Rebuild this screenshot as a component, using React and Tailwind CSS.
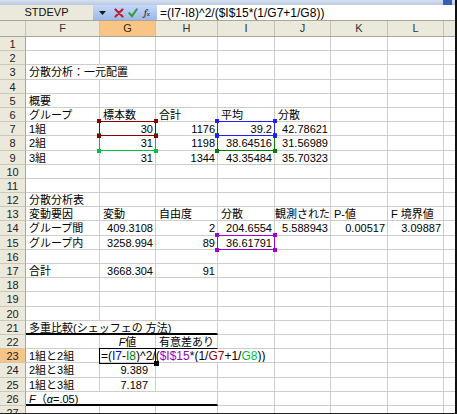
const font = { fontFamily: '"Liberation Sans", "Noto Sans CJK JP", sans-serif' };

const cols = [
  { id: 'F', w: 74 },
  { id: 'G', w: 56 },
  { id: 'H', w: 62 },
  { id: 'I', w: 57 },
  { id: 'J', w: 56 },
  { id: 'K', w: 57 },
  { id: 'L', w: 56 },
  { id: 'M', w: 11 },
];

const ROW_H = 14.2;
const ROWS = Array.from({ length: 27 }, (_, i) => i + 1);

const Formula = () => (
  <>
    =(<span className="text-[#0000ff]">I7</span>-<span className="text-[#008000]">I8</span>)^2/(
    <span className="text-[#9900cc]">$I$15</span>*(1/<span className="text-[#990000]">G7</span>+1/
    <span className="text-[#00c040]">G8</span>))
  </>
);

const cells = {
  3: [{ c: 'F', v: '分散分析：一元配置', span: 2 }],
  5: [{ c: 'F', v: '概要' }],
  6: [
    { c: 'F', v: 'グループ' },
    { c: 'G', v: '標本数' },
    { c: 'H', v: '合計' },
    { c: 'I', v: '平均' },
    { c: 'J', v: '分散' },
  ],
  7: [
    { c: 'F', v: '1組' },
    { c: 'G', v: '30', a: 'r' },
    { c: 'H', v: '1176', a: 'r' },
    { c: 'I', v: '39.2', a: 'r' },
    { c: 'J', v: '42.78621', a: 'r' },
  ],
  8: [
    { c: 'F', v: '2組' },
    { c: 'G', v: '31', a: 'r' },
    { c: 'H', v: '1198', a: 'r' },
    { c: 'I', v: '38.64516', a: 'r' },
    { c: 'J', v: '31.56989', a: 'r' },
  ],
  9: [
    { c: 'F', v: '3組' },
    { c: 'G', v: '31', a: 'r' },
    { c: 'H', v: '1344', a: 'r' },
    { c: 'I', v: '43.35484', a: 'r' },
    { c: 'J', v: '35.70323', a: 'r' },
  ],
  12: [{ c: 'F', v: '分散分析表' }],
  13: [
    { c: 'F', v: '変動要因' },
    { c: 'G', v: '変動' },
    { c: 'H', v: '自由度' },
    { c: 'I', v: '分散' },
    { c: 'J', v: '観測された', a: 'l1' },
    { c: 'K', v: 'P-値' },
    { c: 'L', v: 'F 境界値' },
  ],
  14: [
    { c: 'F', v: 'グループ間' },
    { c: 'G', v: '409.3108', a: 'r' },
    { c: 'H', v: '2', a: 'r' },
    { c: 'I', v: '204.6554', a: 'r' },
    { c: 'J', v: '5.588943', a: 'r' },
    { c: 'K', v: '0.00517', a: 'r' },
    { c: 'L', v: '3.09887', a: 'r' },
  ],
  15: [
    { c: 'F', v: 'グループ内' },
    { c: 'G', v: '3258.994', a: 'r' },
    { c: 'H', v: '89', a: 'r' },
    { c: 'I', v: '36.61791', a: 'r' },
  ],
  17: [
    { c: 'F', v: '合計' },
    { c: 'G', v: '3668.304', a: 'r' },
    { c: 'H', v: '91', a: 'r' },
  ],
  21: [{ c: 'F', v: '多重比較(シェッフェの 方法)', span: 3, cls: 'border-b-2 border-b-black' }],
  22: [
    { c: 'G', v: <><i>F</i>値</>, a: 'c', cls: 'border-b-black' },
    { c: 'H', v: '有意差あり', cls: 'border-b-black' },
  ],
  23: [
    { c: 'F', v: '1組と2組' },
    { c: 'G', v: <Formula />, span: 3, a: 'f', cls: 'bg-white' },
  ],
  24: [
    { c: 'F', v: '2組と3組' },
    { c: 'G', v: '9.389', a: 'r7' },
  ],
  25: [
    { c: 'F', v: '1組と3組' },
    { c: 'G', v: '7.187', a: 'r7' },
  ],
  26: [
    {
      c: 'F',
      v: <><i>F</i>（<i>α</i>=.05)</>,
      span: 3,
      cls: 'border-b-2 border-b-black',
    },
  ],
};

const spanClass = { 1: '', 2: 'col-span-2', 3: 'col-span-3' };
const alignClass = {
  l: 'pl-[3px] text-left',
  l1: 'pl-0 text-left',
  r: 'pr-[2px] text-right',
  r7: 'pr-[7px] text-right',
  c: 'text-center',
  f: 'pl-px text-left text-[12px]',
};

function SheetRow({ n }) {
  const rowCells = cells[n] || [];
  const out = [];
  let i = 0;
  while (i < cols.length) {
    const col = cols[i];
    const cell = rowCells.find((c) => c.c === col.id);
    const span = cell?.span || 1;
    const last = i + span === cols.length;
    out.push(
      <div
        key={col.id}
        className={`overflow-hidden whitespace-nowrap border-b border-[#cdcdcd] text-[11px] leading-[14px] text-black ${
          last ? '' : 'border-r'
        } ${spanClass[span]} ${alignClass[cell?.a || 'l']} ${cell?.cls || ''}`}
      >
        {cell?.v}
      </div>
    );
    i += span;
  }
  const active = n === 23;
  return (
    <div className="flex h-[14.2px]">
      <div
        className={`w-[26px] shrink-0 border-b border-r border-b-[#cbc8b8] border-r-[#a9a693] text-center text-[11px] leading-[14px] text-[#222] ${
          active ? 'bg-[#f8c586]' : 'bg-[#ebe9dc]'
        }`}
      >
        {n}
      </div>
      <div className="grid flex-1 grid-cols-[74px_56px_62px_57px_56px_57px_56px_11px]">{out}</div>
    </div>
  );
}

function RefBox({ x, w, row, color }) {
  const top = (row - 1) * ROW_H - 1;
  const h = ROW_H + 1;
  const sq = { backgroundColor: color };
  return (
    <div className="pointer-events-none absolute" style={{ left: x, top, width: w, height: h }}>
      <div className="absolute inset-0 border" style={{ borderColor: color }} />
      <div className="absolute -left-[2px] -top-[2px] h-[4px] w-[4px]" style={sq} />
      <div className="absolute -right-[2px] -top-[2px] h-[4px] w-[4px]" style={sq} />
      <div className="absolute -bottom-[2px] -left-[2px] h-[4px] w-[4px]" style={sq} />
      <div className="absolute -bottom-[2px] -right-[2px] h-[4px] w-[4px]" style={sq} />
    </div>
  );
}

function FormulaBar() {
  return (
    <div className="flex h-[16px] border-b border-[#a9a693]">
      <div className="flex w-[93px] items-center justify-center bg-[#ebe9dc] text-[11px] text-[#111]">
        STDEVP
      </div>
      <div className="flex w-[64px] items-center bg-gradient-to-b from-[#c6d8f8] to-[#9db8ea]">
        <svg width="7" height="4" viewBox="0 0 7 4" className="ml-[6px]">
          <path d="M0 0h7L3.5 4z" fill="#1a1a1a" />
        </svg>
        <svg width="10" height="10" viewBox="0 0 10 10" className="ml-[8px]">
          <path d="M1.5 1.5l7 7M8.5 1.5l-7 7" stroke="#c0202a" strokeWidth="2.2" strokeLinecap="round" />
        </svg>
        <svg width="10" height="10" viewBox="0 0 10 10" className="ml-[4px]">
          <path d="M1.3 5.2l2.6 3 4.9-7" stroke="#2e9a38" strokeWidth="2" fill="none" strokeLinecap="round" />
        </svg>
        <span className="ml-[6px] font-serif text-[10px] italic leading-none text-[#222]">
          f<span className="text-[7px]">x</span>
        </span>
      </div>
      <div className="flex flex-1 items-center bg-white pl-[3px] text-[12px] text-black">
        =(I7-I8)^2/($I$15*(1/G7+1/G8))
      </div>
    </div>
  );
}

function ColumnHeader() {
  return (
    <div className="flex h-[16px] border-b border-[#a9a693] bg-[#ebe9dc] text-[11px] leading-[15px] text-[#333]">
      <div className="w-[26px] shrink-0 border-r border-[#c5c2b0]" />
      {cols.map((c, i) => (
        <div
          key={c.id}
          style={{ width: c.w }}
          className={`text-center ${i === cols.length - 1 ? '' : 'border-r border-[#c5c2b0]'} ${
            c.id === 'G' ? 'bg-[#f8c586] text-[#3a2a10]' : ''
          }`}
        >
          {c.id === 'M' ? '' : c.id}
        </div>
      ))}
    </div>
  );
}

export default function App() {
  return (
    <div className="flex h-[414px] w-[457px] overflow-hidden border-b border-[#202020] bg-white" style={font}>
      <div className="flex w-[455px] flex-col">
        <div className="flex h-[5px] justify-end bg-gradient-to-b from-[#d6e0f0] to-[#b9c8e3]">
          <div className="mr-[3px] h-[5px] w-[9px] bg-[#3560b0]" />
        </div>
        <FormulaBar />
        <ColumnHeader />
        <div className="relative flex-1 overflow-hidden">
          {ROWS.map((n) => (
            <SheetRow key={n} n={n} />
          ))}
          <RefBox x={217} w={58} row={8} color="#008000" />
          <RefBox x={99} w={57} row={8} color="#00c040" />
          <RefBox x={217} w={58} row={7} color="#2020ff" />
          <RefBox x={99} w={57} row={7} color="#8b0000" />
          <RefBox x={217} w={58} row={15} color="#a000d0" />
          <div className="pointer-events-none absolute left-[99px] top-[311.4px] h-[15.2px] w-[57px] border border-black" />
          <div className="pointer-events-none absolute left-[154px] top-[324px] h-[5px] w-[5px] bg-black" />
        </div>
      </div>
      <div className="w-[2px] bg-[#101010]" />
    </div>
  );
}
